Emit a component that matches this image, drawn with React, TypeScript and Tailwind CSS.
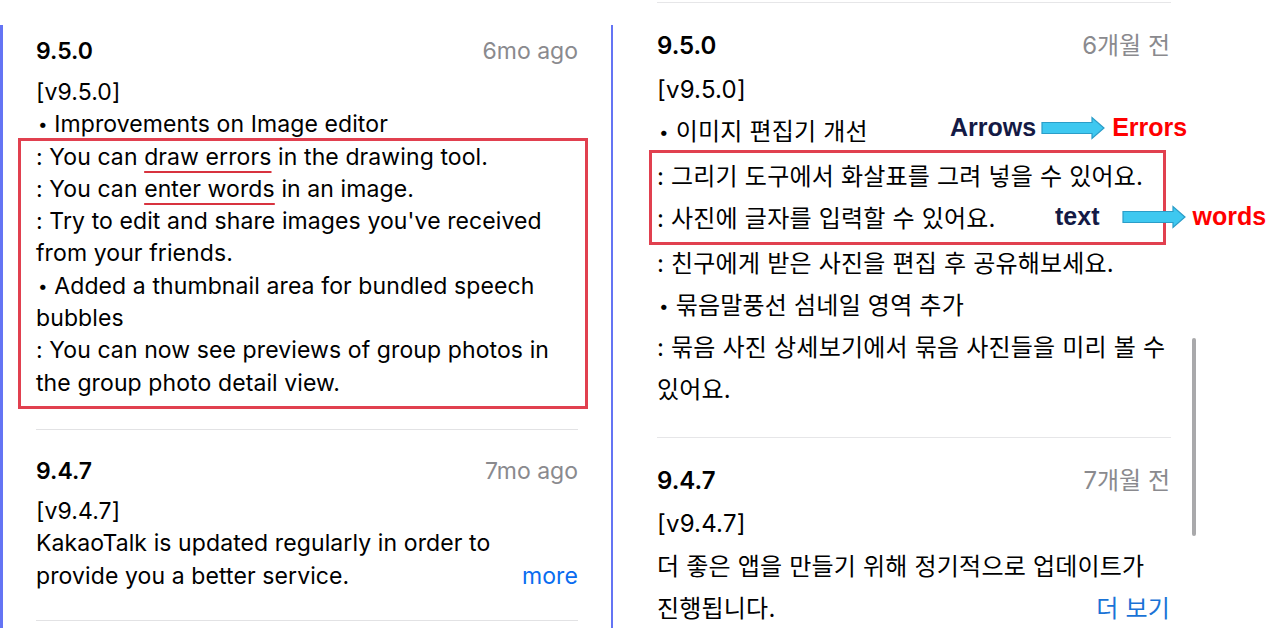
import React from 'react'

const font = { fontFamily: 'Inter, "Noto Sans CJK KR", sans-serif' }
const noteFont = { fontFamily: '"Liberation Sans", Arial, sans-serif' }

function BlockArrow({ width }: { width: number }) {
  // cyan block arrow used by the annotations
  return (
    <svg width={width} height="24" viewBox={`0 0 ${width} 24`}>
      <path
        d={`M1 6.5 H${width - 13} V1.5 L${width - 1} 12 L${width - 13} 22.5 V17.5 H1 Z`}
        fill="#3ec8f0"
        stroke="#2b9dc8"
        strokeWidth="1.2"
      />
    </svg>
  )
}

function Dot() {
  return <span className="text-[17px] align-[2px] ml-[2px]">•</span>
}

export default function App() {
  return (
    <div className="w-[1280px] h-[628px] overflow-hidden bg-white flex text-black" style={font}>
      {/* English panel */}
      <div className="mt-[25px] w-[613px] shrink-0 border-l-[3px] border-r-2 border-[#6474f4] pl-[33px] pr-[33px]">
        <div className="flex justify-between items-center h-[30px] mt-[11px]">
          <span className="text-[23px] font-semibold">9.5.0</span>
          <span className="text-[23px] text-[#8a8a8e]">6mo ago</span>
        </div>
        <div className="mt-[10px] text-[23px] leading-[32.3px] tracking-[0.1px]">
          <p>[v9.5.0]</p>
          <p>
            <Dot /> Improvements on Image editor
          </p>
          <div className="-mt-[3px] -ml-[18px] -mr-[10px] pl-[15px] pb-[7px] border-[3px] border-[#e1404f]">
            <p>
              : You can{' '}
              <span className="underline decoration-[#d8333f] decoration-2 underline-offset-[6px]">draw errors</span>{' '}
              in the drawing tool.
            </p>
            <p>
              : You can{' '}
              <span className="underline decoration-[#d8333f] decoration-2 underline-offset-[6px]">enter words</span>{' '}
              in an image.
            </p>
            <p>
              : Try to edit and share images you've received
              <br />
              from your friends.
            </p>
            <p>
              <Dot /> Added a thumbnail area for bundled speech
              <br />
              bubbles
            </p>
            <p>
              : You can now see previews of group photos in
              <br />
              the group photo detail view.
            </p>
          </div>
        </div>
        <div className="mt-[20px] h-px bg-[#e2e2e4]" />
        <div className="flex justify-between items-center h-[30px] mt-[26px]">
          <span className="text-[23px] font-semibold">9.4.7</span>
          <span className="text-[23px] text-[#8a8a8e]">7mo ago</span>
        </div>
        <div className="mt-[9px] text-[23px] leading-[32.3px] tracking-[0.1px]">
          <p>[v9.4.7]</p>
          <p>KakaoTalk is updated regularly in order to</p>
          <div className="flex justify-between">
            <span>provide you a better service.</span>
            <span className="text-[#0a6cf0]">more</span>
          </div>
        </div>
        <div className="mt-[28px] h-px bg-[#e2e2e4]" />
      </div>

      {/* Korean panel */}
      <div className="relative flex-1 pl-[44px]">
        <div className="w-[514px] h-px mt-[2px] bg-[#e6e6e8]" />
        <div className="w-[513px]">
          <div className="flex justify-between items-center h-[32px] mt-[27px]">
            <span className="text-[24px] font-semibold">9.5.0</span>
            <span className="text-[24px] text-[#8a8a8e]">6개월 전</span>
          </div>
          <div className="mt-[7px] text-[24px] leading-[42px] tracking-[0.2px]">
            <p>[v9.5.0]</p>
            <p>
              <Dot /> 이미지 편집기 개선
            </p>
            <div className="-mt-[3px] -ml-[8px] pl-[5px] pt-[3px] pb-[2px] w-[517px] border-[3px] border-[#e1404f]">
              <p>: 그리기 도구에서 화살표를 그려 넣을 수 있어요.</p>
              <p>: 사진에 글자를 입력할 수 있어요.</p>
            </div>
            <p className="-mt-[2px]">: 친구에게 받은 사진을 편집 후 공유해보세요.</p>
            <p>
              <Dot /> 묶음말풍선 섬네일 영역 추가
            </p>
            <p>
              : 묶음 사진 상세보기에서 묶음 사진들을 미리 볼 수
              <br />
              있어요.
            </p>
          </div>
          <div className="mt-[26px] h-px w-[514px] bg-[#e6e6e8]" />
          <div className="flex justify-between items-center h-[32px] mt-[27px]">
            <span className="text-[24px] font-semibold">9.4.7</span>
            <span className="text-[24px] text-[#8a8a8e]">7개월 전</span>
          </div>
          <div className="mt-[6px] text-[24px] leading-[42.5px] tracking-[0.2px]">
            <p>[v9.4.7]</p>
            <p>더 좋은 앱을 만들기 위해 정기적으로 업데이트가</p>
            <div className="flex justify-between">
              <span>진행됩니다.</span>
              <span className="text-[#1a73d6]">더 보기</span>
            </div>
          </div>
        </div>

        {/* annotations */}
        <div className="absolute left-[337px] top-[113px] h-[30px] flex items-center text-[25px] font-bold" style={noteFont}>
          <span className="text-[#141a45]">Arrows</span>
          <span className="ml-[5px] flex">
            <BlockArrow width={64} />
          </span>
          <span className="ml-[7px] text-[#ff0000]">Errors</span>
        </div>
        <div className="absolute left-[442px] top-[202px] h-[30px] flex items-center text-[25px] font-bold" style={noteFont}>
          <span className="text-[#141a45]">text</span>
          <span className="ml-[23px] flex">
            <BlockArrow width={64} />
          </span>
          <span className="ml-[6px] text-[#ff0000]">words</span>
        </div>

        {/* scroll indicator */}
        <div className="absolute left-[579px] top-[338px] w-[4px] h-[198px] rounded-full bg-[#a9a9ab]" />
      </div>
    </div>
  )
}
